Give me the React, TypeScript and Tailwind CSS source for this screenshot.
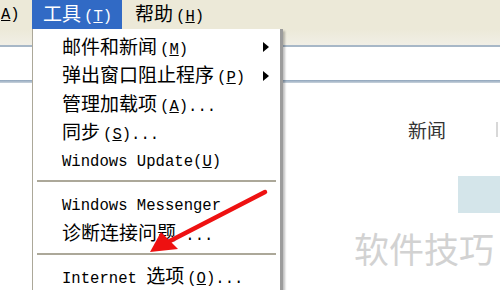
const cjk = '"Noto Sans CJK SC", "Noto Sans", sans-serif';
const mono = '"Liberation Mono", "Noto Sans CJK SC", monospace';

function C({ children }: { children: React.ReactNode }) {
  return (
    <span className="text-[19px]" style={{ fontFamily: cjk }}>
      {children}
    </span>
  );
}

function L({ children, gap }: { children: React.ReactNode; gap?: boolean }) {
  return (
    <span
      className={"text-[15.6px] " + (gap ? "ml-[3px]" : "")}
      style={{ fontFamily: mono }}
    >
      {children}
    </span>
  );
}

function Item({
  children,
  sub,
  tall,
}: {
  children: React.ReactNode;
  sub?: boolean;
  tall?: boolean;
}) {
  return (
    <div
      className={
        "relative flex items-center pl-[29px] text-black leading-none " +
        (tall ? "h-[28.5px]" : "h-[28px]")
      }
    >
      <span className="whitespace-pre">{children}</span>
      {sub && (
        <span className="absolute right-[11px] top-1/2 -translate-y-1/2 w-0 h-0 border-y-[5px] border-y-transparent border-l-[6px] border-l-black" />
      )}
    </div>
  );
}

export default function App() {
  return (
    <div className="relative w-[500px] h-[290px] overflow-hidden bg-white">
      {/* menu bar */}
      <div className="flex h-[29px] items-center bg-[#ece9d8] text-black">
        <div className="w-[32px] pl-[1px]">
          <L>
            <u>A</u>)
          </L>
        </div>
        <div className="flex h-full w-[90px] items-center bg-[#316ac5] pl-[11px] text-white leading-none">
          <span>
            <C>工具</C>
            <L gap>
              (<u>T</u>)
            </L>
          </span>
        </div>
        <div className="flex items-center pl-[13px] leading-none">
          <span>
            <C>帮助</C>
            <L gap>
              (<u>H</u>)
            </L>
          </span>
        </div>
      </div>

      {/* toolbar strip */}
      <div className="h-[16px] bg-gradient-to-b from-[#ece9d8] to-[#f1efe6]" />
      <div className="h-[2px] bg-[#a7b7c7]" />
      {/* address bar */}
      <div className="h-[33px] bg-white" />
      <div className="h-[3px] bg-gradient-to-b from-[#8ea4bb] to-[#c9d3dc]" />

      {/* page content */}
      <div className="pl-[408px] pt-[37px]">
        <div className="flex items-center leading-none">
          <span className="text-[19px] text-[#333]" style={{ fontFamily: cjk }}>
            新闻
          </span>
          <span className="ml-[50px] h-[15px] w-[2px] bg-[#d8d8d8]" />
        </div>
        <div className="ml-[50px] mt-[37px] h-[37px] w-[50px] bg-[#d4e5ea]" />
      </div>

      {/* watermark */}
      <div
        className="absolute left-[354px] top-[230px] text-[35px] leading-none text-[#d2d2d2]"
        style={{ fontFamily: cjk }}
      >
        软件技巧
      </div>

      {/* dropdown menu */}
      <div className="absolute left-[32px] top-[29px] w-[251px] h-[270px] border-l border-[#aca899] border-r-[3px] border-r-[#9c9c9c] bg-white pt-[4px] shadow-[2px_2px_2px_rgba(0,0,0,0.25)]">
        <Item sub tall>
          <C>邮件和新闻</C>
          <L gap>
            (<u>M</u>)
          </L>
        </Item>
        <Item sub tall>
          <C>弹出窗口阻止程序</C>
          <L gap>
            (<u>P</u>)
          </L>
        </Item>
        <Item tall>
          <C>管理加载项</C>
          <L gap>
            (<u>A</u>)...
          </L>
        </Item>
        <Item tall>
          <C>同步</C>
          <L gap>
            (<u>S</u>)...
          </L>
        </Item>
        <Item tall>
          <L>
            Windows Update(<u>U</u>)
          </L>
        </Item>
        <div className="mx-[4px] mt-[4px] mb-[10px] h-[2px] bg-[#aca899]" />
        <Item>
          <L>Windows Messenger</L>
        </Item>
        <Item>
          <C>诊断连接问题</C>
          <L> ...</L>
        </Item>
        <div className="mx-[4px] mt-[5px] mb-[8px] h-[2px] bg-[#aca899]" />
        <Item>
          <L>Internet </L>
          <C>选项</C>
          <L gap>
            (<u>O</u>)...
          </L>
        </Item>
      </div>

      {/* red arrow annotation */}
      <svg
        className="absolute left-0 top-0"
        width="500"
        height="290"
        viewBox="0 0 500 290"
      >
        <line
          x1="265"
          y1="192"
          x2="168"
          y2="242"
          stroke="#ee1111"
          strokeWidth="4.5"
          strokeLinecap="round"
        />
        <polygon points="150,252 161,232 178,249" fill="#ee1111" />
      </svg>
    </div>
  );
}
